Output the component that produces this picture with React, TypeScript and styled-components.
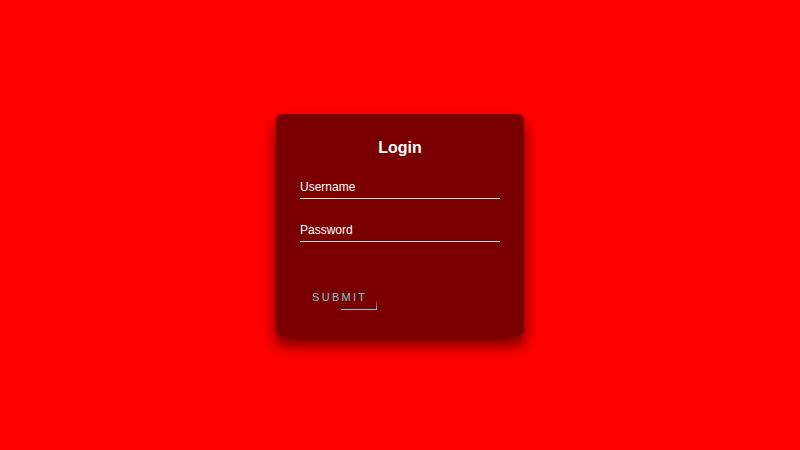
import React from 'react';
import styled, { createGlobalStyle } from 'styled-components';

const GlobalStyle = createGlobalStyle`
  html, body {
    margin: 0;
    padding: 0;
    background: #ff0000;
    font-family: "Liberation Sans", Arial, sans-serif;
  }
`;

const PageS = styled.div`
  width: 800px;
  height: 450px;
  display: flex;
  align-items: center;
  justify-content: center;
  background: #ff0000;
`;

const BoxS = styled.form`
  width: 200px;
  padding: 25px 24px 26px;
  background: rgba(0, 0, 0, 0.52);
  border-radius: 6px;
  box-shadow: 0 9px 15px rgba(0, 0, 0, 0.6);
  display: flex;
  flex-direction: column;
`;

const TitleS = styled.h2`
  margin: 0 0 21px;
  font-size: 16px;
  line-height: 18px;
  font-weight: 700;
  color: #fff;
  text-align: center;
`;

const FieldS = styled.div`
  padding: 2px 0 4px;
  border-bottom: 1px solid #f4e6e6;
  margin-bottom: 22px;
  font-size: 12px;
  line-height: 14px;
  color: #fff;
`;

const ButtonS = styled.div`
  position: relative;
  align-self: flex-start;
  margin-top: 21px;
  padding: 6px 10px 6px 12px;
  font-size: 11px;
  line-height: 13px;
  letter-spacing: 2.3px;
  color: #7ccbd4;
`;

const BottomLineS = styled.span`
  position: absolute;
  bottom: 0;
  right: 0;
  width: 36px;
  height: 1px;
  background: #86cbd3;
`;

const RightLineS = styled.span`
  position: absolute;
  right: 0;
  bottom: 0;
  width: 1px;
  height: 9px;
  background: linear-gradient(180deg, rgba(134, 203, 211, 0.2), #86cbd3);
`;

export default function App() {
  return (
    <>
      <GlobalStyle />
      <PageS>
        <BoxS>
          <TitleS>Login</TitleS>
          <FieldS>Username</FieldS>
          <FieldS>Password</FieldS>
          <ButtonS>
            SUBMIT
            <BottomLineS />
            <RightLineS />
          </ButtonS>
        </BoxS>
      </PageS>
    </>
  );
}
